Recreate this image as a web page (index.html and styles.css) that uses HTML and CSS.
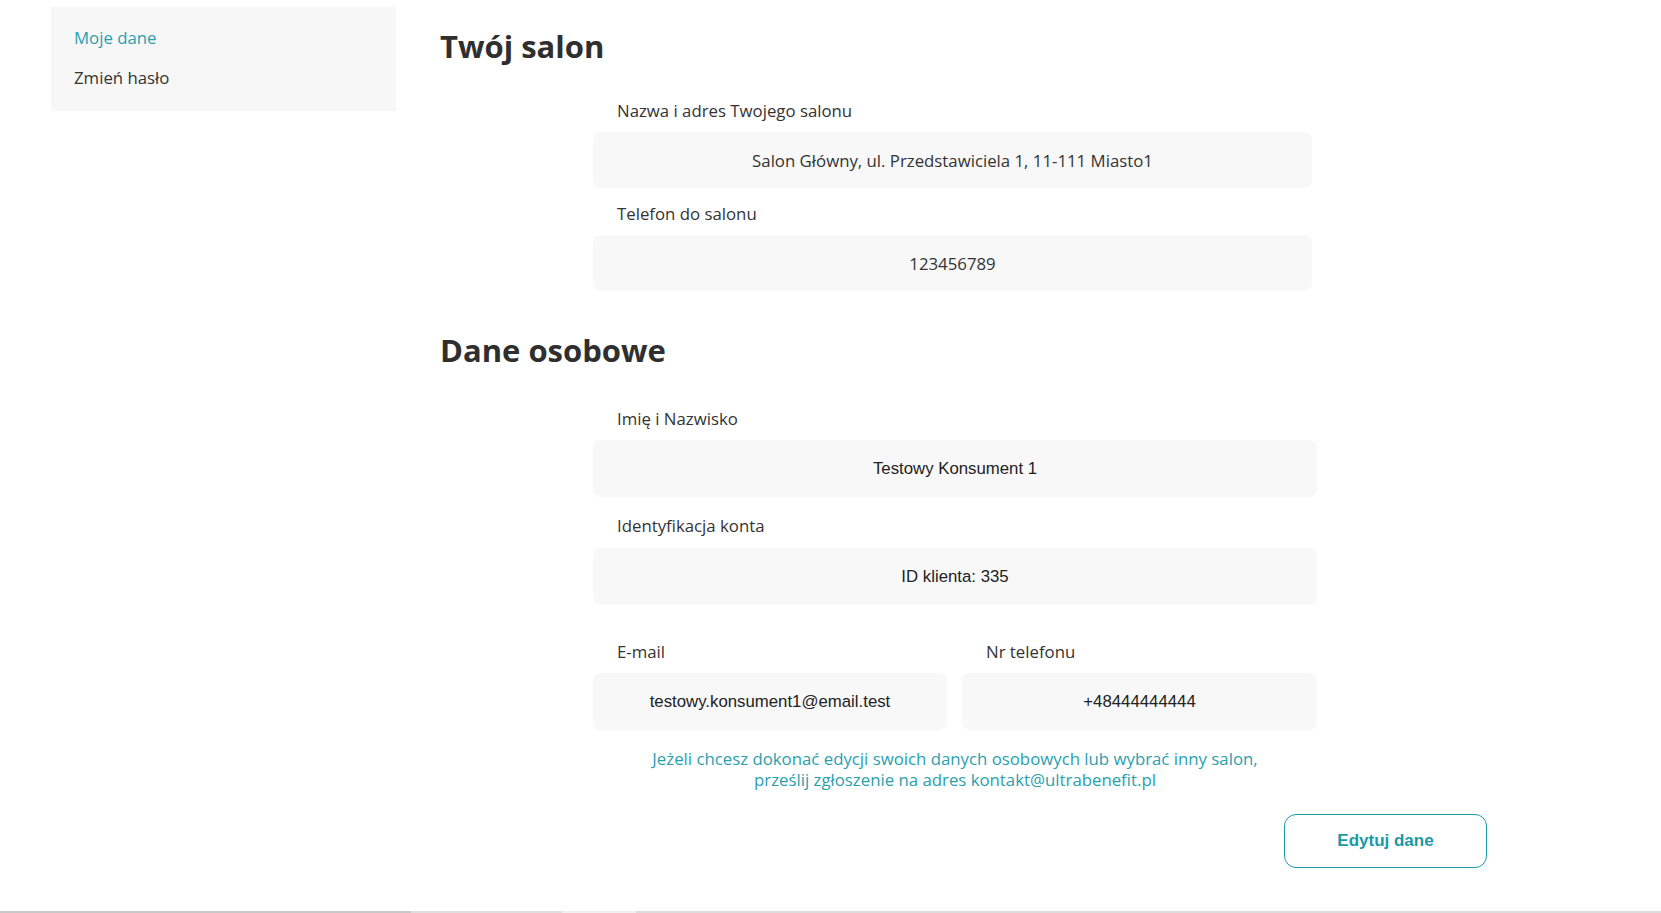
FILE: index.html
```html
<!DOCTYPE html>
<html lang="pl">
<head>
    <meta charset="UTF-8">
    <meta name="viewport" content="width=device-width, initial-scale=1.0">
    <title>Moje dane</title>
    <link rel="stylesheet" href="styles.css">
</head>
<body>
    <div class="page">
        <aside class="sidebar">
            <a class="side-link active" href="#">Moje dane</a>
            <a class="side-link" href="#">Zmień hasło</a>
        </aside>

        <main class="content">
            <h1 class="title">Twój salon</h1>
            <div class="form narrow">
                <div class="field">
                    <div class="label">Nazwa i adres Twojego salonu</div>
                    <div class="value">Salon Główny, ul. Przedstawiciela 1, 11-111 Miasto1</div>
                </div>
                <div class="field">
                    <div class="label">Telefon do salonu</div>
                    <div class="value">123456789</div>
                </div>
            </div>

            <h1 class="title second">Dane osobowe</h1>
            <div class="form personal">
                <div class="field">
                    <div class="label">Imię i Nazwisko</div>
                    <div class="value arial">Testowy Konsument 1</div>
                </div>
                <div class="field spaced">
                    <div class="label">Identyfikacja konta</div>
                    <div class="value arial">ID klienta: 335</div>
                </div>
                <div class="row">
                    <div class="field">
                        <div class="label">E-mail</div>
                        <div class="value arial">testowy.konsument1@email.test</div>
                    </div>
                    <div class="field">
                        <div class="label">Nr telefonu</div>
                        <div class="value arial">+48444444444</div>
                    </div>
                </div>
                <p class="note">Jeżeli chcesz dokonać edycji swoich danych osobowych lub wybrać inny salon,<br>prześlij zgłoszenie na adres kontakt@ultrabenefit.pl</p>
            </div>

            <div class="actions">
                <button class="btn-edit">Edytuj dane</button>
            </div>
        </main>
    </div>

    <div class="scroll-strip">
        <span class="seg dark"></span>
        <span class="seg mid"></span>
        <span class="seg pale"></span>
        <span class="seg rest"></span>
    </div>
</body>
</html>
```

FILE: styles.css
```css
* {
    box-sizing: border-box;
}

body {
    margin: 0;
    min-height: 100vh;
    display: flex;
    flex-direction: column;
    background-color: #ffffff;
    color: #333333;
    font-family: "Open Sans", Arial, sans-serif;
    font-size: 16.8px;
}

.page {
    display: flex;
    align-items: flex-start;
    padding: 7px 0 0 51px;
    flex: 1;
}

.sidebar {
    width: 345px;
    height: 104px;
    background-color: #f7f7f7;
    padding: 20px 0 0 23px;
    display: flex;
    flex-direction: column;
    gap: 18px;
}

.side-link {
    color: #333333;
    text-decoration: none;
    line-height: 22px;
}

.side-link.active {
    color: #2a9fae;
}

.content {
    width: 1047px;
    margin-left: 44px;
    padding-top: 17px;
}

.title {
    margin: 0;
    font-size: 31px;
    font-weight: 700;
    line-height: 44px;
    color: #2f2f2f;
}

.title.second {
    margin-top: 37px;
}

.form {
    width: 724px;
    margin-left: 153px;
    margin-top: 32px;
}

.form.narrow {
    width: 719px;
}

.form.personal {
    margin-top: 36px;
}

.field {
    display: flex;
    flex-direction: column;
    gap: 10px;
    margin-bottom: 15px;
}

.field.spaced {
    padding-top: 3px;
}

.field.spaced .value {
    margin-top: 1px;
}

.label {
    padding-left: 24px;
    line-height: 22px;
    color: #333333;
}

.value {
    height: 56px;
    background-color: #f8f8f8;
    border-radius: 8px;
    display: flex;
    align-items: center;
    justify-content: center;
    color: #333333;
}

.personal .value {
    height: 57px;
}

.value.arial {
    font-family: "Liberation Sans", Arial, sans-serif;
    color: #222222;
}

.row {
    display: grid;
    grid-template-columns: 354px 355px;
    gap: 15px;
    margin-top: 36px;
}

.row .field {
    margin-bottom: 0;
}

.note {
    margin: 18px 0 0;
    text-align: center;
    line-height: 21px;
    color: #2a9fae;
}

.actions {
    display: flex;
    justify-content: flex-end;
    margin-top: 24px;
}

.btn-edit {
    width: 203px;
    height: 54px;
    background-color: #ffffff;
    border: 1px solid #1a9aa6;
    border-radius: 12px;
    color: #1a9aa6;
    font-family: "Liberation Sans", Arial, sans-serif;
    font-size: 17px;
    font-weight: 700;
    cursor: pointer;
}

.scroll-strip {
    display: flex;
    height: 2px;
}

.seg.dark {
    width: 411px;
    background-color: #c8c8c8;
}

.seg.mid {
    width: 151px;
    background-color: #dedede;
}

.seg.pale {
    width: 74px;
    background-color: #f0f0f0;
}

.seg.rest {
    flex: 1;
    background-color: #dcdcdc;
}
```
